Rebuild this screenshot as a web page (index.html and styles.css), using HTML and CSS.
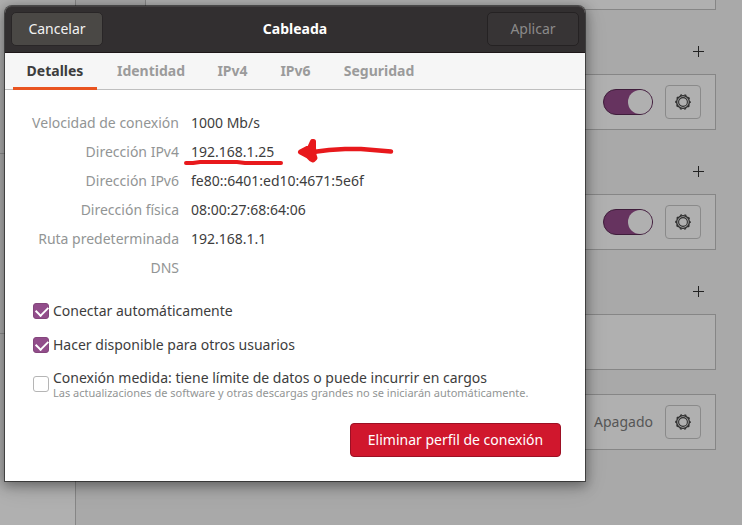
FILE: index.html
```html
<!DOCTYPE html>
<html lang="es">
<head>
<meta charset="utf-8">
<meta name="viewport" content="width=device-width, initial-scale=1">
<title>Cableada</title>
<link rel="stylesheet" href="styles.css">
</head>
<body>
<svg class="symbols" aria-hidden="true">
  <symbol id="gear" viewBox="0 0 16 16">
    <g fill="none" stroke="currentColor">
      <circle cx="8" cy="8" r="6.4" stroke-width="1.4"/>
      <circle cx="8" cy="8" r="7.2" stroke-width="1.2" stroke-dasharray="2 2.524" stroke-dashoffset="1"/>
      <circle cx="8" cy="8" r="4.4" stroke-width="1.1"/>
    </g>
  </symbol>
  <symbol id="plus" viewBox="0 0 12 12">
    <path d="M5.5 0v11M0 5.5h11" fill="none" stroke="currentColor"/>
  </symbol>
</svg>
<div class="settings">
  <nav class="sidebar">
    <div class="group group-first"></div>
    <div class="group"></div>
  </nav>
  <main class="content">
    <div class="card card-clipped"></div>
    <div class="heading"><button class="add" aria-label="+"><svg><use href="#plus"/></svg></button></div>
    <div class="card">
      <input class="switch" type="checkbox" role="switch" checked>
      <button class="gear"><svg><use href="#gear"/></svg></button>
    </div>
    <div class="heading"><button class="add" aria-label="+"><svg><use href="#plus"/></svg></button></div>
    <div class="card">
      <input class="switch" type="checkbox" role="switch" checked>
      <button class="gear"><svg><use href="#gear"/></svg></button>
    </div>
    <div class="heading"><button class="add" aria-label="+"><svg><use href="#plus"/></svg></button></div>
    <div class="card"></div>
    <div class="card card-proxy">
      <span class="state">Apagado</span>
      <button class="gear"><svg><use href="#gear"/></svg></button>
    </div>
  </main>
</div>

<section class="dialog" role="dialog" aria-labelledby="title">
  <header class="titlebar">
    <button class="bar-button">Cancelar</button>
    <h1 class="title" id="title">Cableada</h1>
    <button class="bar-button apply" disabled>Aplicar</button>
  </header>
  <div class="tabs" role="tablist">
    <button class="tab active" role="tab" aria-selected="true">Detalles</button>
    <button class="tab" role="tab">Identidad</button>
    <button class="tab" role="tab">IPv4</button>
    <button class="tab" role="tab">IPv6</button>
    <button class="tab" role="tab">Seguridad</button>
  </div>
  <div class="panel">
    <dl class="details">
      <dt>Velocidad de conexión</dt><dd>1000 Mb/s</dd>
      <dt>Dirección IPv4</dt>
      <dd class="marked">192.168.1.25
        <svg class="marker" viewBox="0 0 212 30" aria-hidden="true">
          <g fill="none" stroke="#e8191c" stroke-linecap="round" stroke-linejoin="round">
            <path stroke-width="4" d="M3 25L10 25L17 24H54L62 25H98"/>
            <path stroke-width="4.5" d="M130 14L146 12L162 11H178L190 12L208 13.500"/>
          </g>
          <path fill="#e8191c" stroke="#e8191c" stroke-width="5" stroke-linejoin="round" d="M117.500 14L127 9L129.500 3.500L130.500 3.500V10L131 14L131 17L132 20L130 22L128 21L125 18Z"/>
        </svg>
      </dd>
      <dt>Dirección IPv6</dt><dd>fe80::6401:ed10:4671:5e6f</dd>
      <dt>Dirección física</dt><dd>08:00:27:68:64:06</dd>
      <dt>Ruta predeterminada</dt><dd>192.168.1.1</dd>
      <dt>DNS</dt><dd></dd>
    </dl>
    <div class="options">
      <label class="option"><input class="check" type="checkbox" checked><span>Conectar automáticamente</span></label>
      <label class="option"><input class="check" type="checkbox" checked><span>Hacer disponible para otros usuarios</span></label>
      <label class="option"><input class="check" type="checkbox"><span class="stack"><span>Conexión medida: tiene límite de datos o puede incurrir en cargos</span><small class="note">Las actualizaciones de software y otras descargas grandes no se iniciarán automáticamente.</small></span></label>
    </div>
    <div class="actions"><button class="remove">Eliminar perfil de conexión</button></div>
  </div>
</section>
</body>
</html>
```
FILE: styles.css
```css
* { box-sizing: border-box; }

body {
  margin: 0;
  min-height: 100vh;
  position: relative;
  overflow: hidden;
  background: #a9a9a9;
  color: #3d3d3d;
  font: 14px/20px "Noto Sans", sans-serif;
}

button { font: inherit; color: inherit; margin: 0; }

.symbols { position: absolute; width: 0; height: 0; }

/* Window behind the dialog */
.settings { display: flex; min-height: 100vh; }

.sidebar {
  flex: 0 0 76px;
  background: #b0b0b0;
  border-right: 1px solid #868686;
}
.group { height: 180px; border-bottom: 1px solid #909090; }
.group-first { height: 154px; }

.content { flex: 1; padding: 0 26px 0 69px; }

.card {
  display: flex;
  align-items: center;
  justify-content: flex-end;
  gap: 12px;
  height: 56px;
  padding: 0 14px;
  background: #b0b0b0;
  border: 1px solid #868686;
}
.card-clipped { height: 10px; border-top: 0; }
.card-proxy { margin-top: 24px; }

.heading {
  display: flex;
  align-items: center;
  justify-content: flex-end;
  height: 64px;
  padding: 20px 1px 0 0;
}
.add {
  display: grid;
  place-items: center;
  width: 32px;
  height: 32px;
  padding: 0;
  border: 0;
  background: none;
  color: #222;
}
.add svg { width: 12px; height: 12px; }

.gear {
  display: grid;
  place-items: center;
  width: 36px;
  height: 34px;
  padding: 0;
  border: 1px solid #8a8a8a;
  border-radius: 4px;
  background: #b0b0b0;
  color: #303030;
}
.gear svg { width: 16px; height: 16px; }

.switch {
  appearance: none;
  display: flex;
  justify-content: flex-end;
  width: 50px;
  height: 26px;
  margin: 0;
  border: 1px solid #3f1d3b;
  border-radius: 13px;
  background: #66335f;
}
.switch::before {
  content: "";
  width: 24px;
  height: 24px;
  border-radius: 50%;
  background: #b0b0b0;
}
.state { color: #565656; }

/* Dialog */
.dialog {
  position: absolute;
  top: 6px;
  left: 5px;
  width: min(580px, calc(100% - 10px));
  border-radius: 7px 7px 0 0;
  background: #fff;
  box-shadow: 0 0 0 1px rgba(0, 0, 0, 0.5), 0 3px 12px 2px rgba(0, 0, 0, 0.35), 0 6px 24px rgba(0, 0, 0, 0.12);
}

.titlebar {
  display: grid;
  grid-template-columns: 1fr auto 1fr;
  align-items: center;
  height: 47px;
  padding: 0 6px;
  border-bottom: 1px solid #1e1719;
  border-radius: 7px 7px 0 0;
  background: #322f30;
  box-shadow: inset 0 1px #434041;
  color: #fff;
}
.title { margin: 0; font-size: 14px; line-height: 20px; font-weight: 700; }
.bar-button {
  justify-self: start;
  width: 92px;
  height: 34px;
  padding: 0;
  border: 1px solid #292627;
  border-radius: 5px;
  background: #4a4845;
  color: #f2f2f2;
}
.apply {
  justify-self: end;
  border-color: #252223;
  background: #373435;
  color: #8b8a8a;
}

.tabs {
  display: grid;
  grid-template-columns: 84px 92px 55px 55px 96px;
  column-gap: 8px;
  height: 37px;
  padding: 0 8px;
  border-bottom: 1px solid #bfbfbf;
  background: #f6f6f6;
}
.tab {
  height: 37px;
  padding: 2px 0 0;
  border: 0;
  border-bottom: 3px solid transparent;
  background: none;
  color: #9b9b9b;
  font-weight: 700;
}
.active { border-bottom-color: #e95420; color: #3d3d3d; }

.panel { padding: 23px 24px 24px; }

.details {
  display: grid;
  grid-template-columns: 150px 1fr;
  gap: 9px 12px;
  margin: 0;
}
.details dt { color: #929595; text-align: right; white-space: nowrap; }
.details dd { margin: 0; }
.marked { position: relative; }
.marker {
  position: absolute;
  top: -4px;
  left: -8px;
  width: 212px;
  height: 30px;
}

.options {
  display: grid;
  gap: 14px;
  margin-top: 23px;
  padding-left: 4px;
}
.option { display: flex; align-items: center; gap: 4px; }
.stack { display: grid; line-height: 17px; }
.note { color: #929595; font-size: 11px; line-height: 13px; }
.check {
  appearance: none;
  flex: none;
  width: 16px;
  height: 16px;
  margin: 0;
  border: 1px solid #b5b5b5;
  border-radius: 3px;
  background: #fff;
}
.check:checked {
  border-color: #84467c;
  background: #924d8b;
}
.check:checked::before {
  content: "";
  display: block;
  width: 10px;
  height: 6px;
  margin: 2px 0 0 2px;
  border: solid #fff;
  border-width: 0 0 2px 2px;
  transform: rotate(-45deg);
}

.actions { display: flex; justify-content: flex-end; margin-top: 24px; }
.remove {
  width: 211px;
  height: 34px;
  padding: 0;
  border: 1px solid #9c1024;
  border-radius: 4px;
  background: #d0172d;
  color: #fff;
}
```
